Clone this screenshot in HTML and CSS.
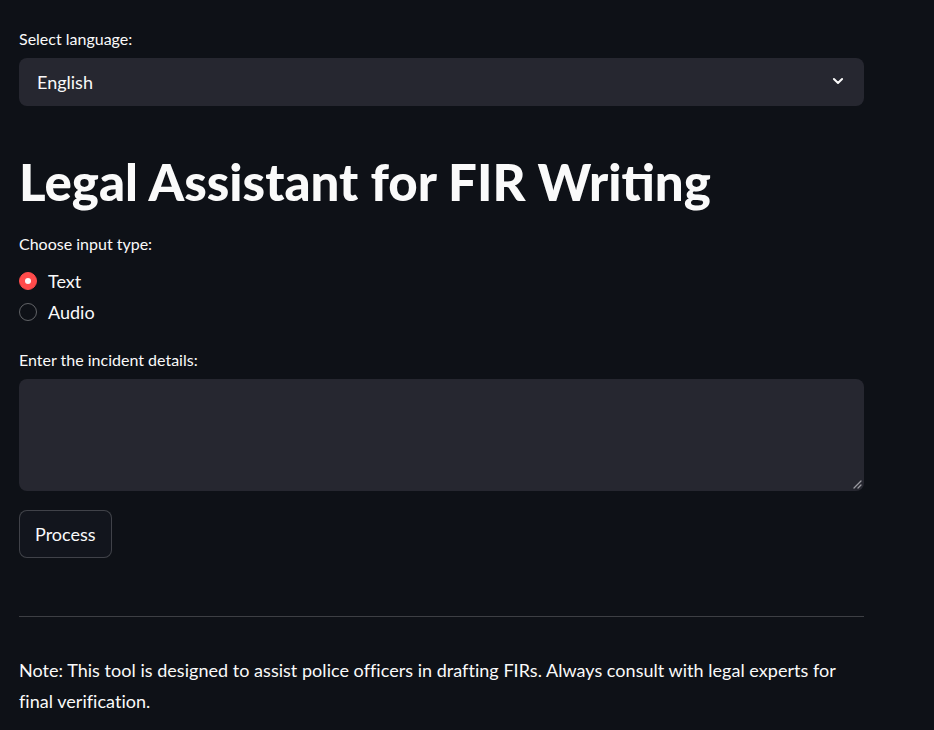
FILE: index.html
```html
<!DOCTYPE html>
<html>
<head>
<meta charset="utf-8">
<link rel="stylesheet" href="styles.css">
</head>
<body>
<main class="main">
  <div class="field">
    <label class="label">Select language:</label>
    <div class="select">
      <span class="select-value">English</span>
      <svg class="chevron" width="14" height="14" viewBox="0 0 24 24"><path d="M5 8.5l7 7 7-7" fill="none" stroke="#fafafa" stroke-width="3.4" stroke-linecap="round" stroke-linejoin="round"/></svg>
    </div>
  </div>
  <h1 class="title">Legal Assistant for FIR Writing</h1>
  <div class="field radios">
    <label class="label">Choose input type:</label>
    <div class="radio-list">
      <div class="radio"><span class="dot checked"></span><span>Text</span></div>
      <div class="radio"><span class="dot"></span><span>Audio</span></div>
    </div>
  </div>
  <div class="field area-field">
    <label class="label">Enter the incident details:</label>
    <div class="textarea">
      <svg class="grip" width="10" height="10" viewBox="0 0 10 10"><path d="M9 2L2 9M9 6L6 9" stroke="#9a9aa0" stroke-width="1.3" stroke-linecap="round"/></svg>
    </div>
  </div>
  <button class="btn">Process</button>
  <hr class="divider">
  <p class="note">Note: This tool is designed to assist police officers in drafting FIRs. Always consult with legal experts for final verification.</p>
</main>
</body>
</html>
```
FILE: styles.css
```css
* { box-sizing: border-box; }
html, body { margin: 0; padding: 0; background: #0e1117; }
body {
  font-family: "Lato", "Noto Sans", sans-serif;
  color: #fafafa;
  width: 934px;
  height: 730px;
  overflow: hidden;
}
.main {
  width: 845px;
  margin-left: 19px;
  padding-top: 29px;
  display: flex;
  flex-direction: column;
}
.field { display: flex; flex-direction: column; }
.label {
  font-size: 16px;
  line-height: 20px;
  color: #fafafa;
  margin-bottom: 9px;
}
.select {
  height: 48px;
  background: #262730;
  border-radius: 8px;
  display: flex;
  align-items: center;
  justify-content: space-between;
  padding: 0 18px;
}
.select-value { font-size: 18px; }
.chevron { margin-right: 1px; margin-top: -2px; }
.title {
  font-size: 51px;
  font-weight: 900;
  line-height: 60px;
  margin: 46px 0 22px;
  letter-spacing: 0px;
}
.radio-list { display: flex; flex-direction: column; gap: 9px; margin-top: 7px; }
.radio { display: flex; align-items: center; gap: 11px; font-size: 18px; line-height: 22px; }
.dot {
  width: 18px; height: 18px; border-radius: 50%;
  border: 1px solid rgba(250,250,250,0.35);
  display: inline-block;
  position: relative;
}
.dot.checked { background: #ff4b4b; border-color: #ff4b4b; }
.dot.checked::after {
  content: ""; position: absolute; left: 5px; top: 5px;
  width: 6px; height: 6px; border-radius: 50%; background: #fafafa;
}
.area-field { margin-top: 27px; }
.textarea {
  height: 112px;
  background: #262730;
  border-radius: 8px;
  position: relative;
}
.grip { position: absolute; right: 2px; bottom: 2px; }
.btn {
  align-self: flex-start;
  margin-top: 19px;
  height: 48px;
  padding: 0 15px;
  background: #12151d;
  border: 1px solid rgba(250,250,250,0.2);
  border-radius: 8px;
  color: #fafafa;
  font-family: inherit;
  font-size: 18px;
}
.divider {
  border: none;
  border-top: 1px solid rgba(250,250,250,0.2);
  margin: 58px 0 0;
  height: 0;
}
.note {
  margin: 38px 0 0;
  font-size: 18px;
  line-height: 31px;
  letter-spacing: 0.03px;
}
```
